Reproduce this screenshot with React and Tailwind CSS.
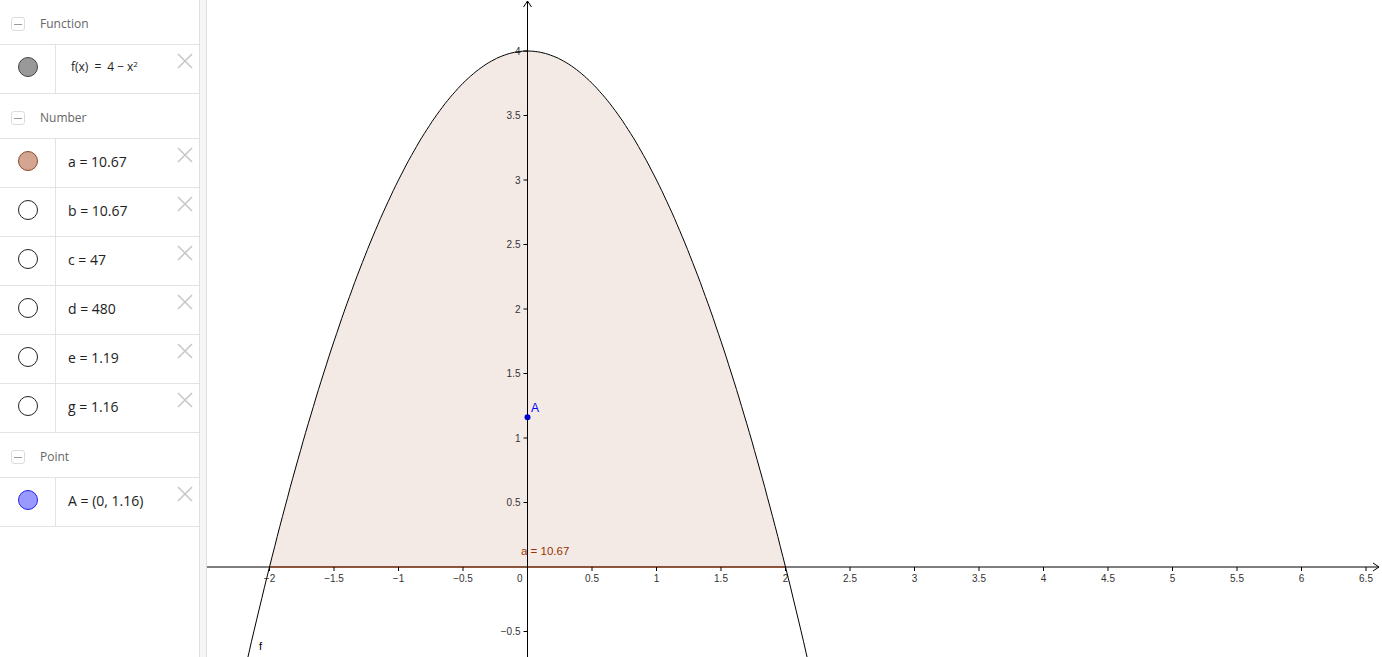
import React from 'react';

const ox = 320.5;
const oy = 567;
const s = 129;

const px = (x) => ox + x * s;
const py = (y) => oy - y * s;
const fmt = (v) => (v < 0 ? '\u2212' + String(Math.abs(v)) : String(v));

function curvePath(a, b) {
  let d = '';
  for (let x = a; x <= b + 1e-9; x += 0.02) {
    d += (d ? ' L' : 'M') + px(x).toFixed(1) + ' ' + py(4 - x * x).toFixed(1);
  }
  return d;
}

function HeaderRow({ label }) {
  return (
    <div className="flex h-[45px] items-center border-b border-[#e3e3e3] pl-[11px] pt-[4px]">
      <div className="flex h-[14px] w-[14px] items-center justify-center rounded-[3px] border border-[#dcdcdc]">
        <div className="h-px w-[8px] bg-[#9a9a9a]" />
      </div>
      <span className="ml-[15px] text-[12px] text-[#666]">{label}</span>
    </div>
  );
}

function ItemRow({ dot, children }) {
  return (
    <div className="relative flex h-[49px] border-b border-[#e3e3e3]">
      <div className="flex w-[56px] items-center justify-center border-r border-[#e3e3e3] pb-[4px]">
        <div className={'h-[20px] w-[20px] rounded-full border ' + dot} />
      </div>
      <div className="flex items-center pb-[4px] pl-[12px] text-[14px] text-[#222]">{children}</div>
      <svg className="absolute right-[6px] top-[8px]" width="16" height="16" viewBox="0 0 16 16">
        <path d="M1 1 L15 15 M15 1 L1 15" stroke="#c8c8c8" strokeWidth="1.6" />
      </svg>
    </div>
  );
}

export default function App() {
  const xTicks = [];
  for (let i = -4; i <= 13; i++) xTicks.push(i / 2);
  const yTicks = [-0.5, 0.5, 1, 1.5, 2, 2.5, 3, 3.5, 4];

  const fillPath = curvePath(-2, 2) + ` L${px(2)} ${oy} L${px(-2)} ${oy} Z`;

  return (
    <div className="flex h-[657px] w-[1382px] overflow-hidden bg-white" style={{ fontFamily: '"Open Sans", "Liberation Sans", sans-serif' }}>
      <div className="w-[200px] shrink-0 border-r border-[#e0e0e0]">
        <HeaderRow label="Function" />
        <ItemRow dot="bg-[#999999] border-[#444]">
          <span className="ml-[3px] flex items-baseline text-[12px]">
            f(x)<span className="mx-[6px]">=</span>4<span className="mx-[3px]">−</span>x<sup className="text-[8px]">2</sup>
          </span>
        </ItemRow>
        <HeaderRow label="Number" />
        <ItemRow dot="bg-[#d4a590] border-[#8a4a2a]">a = 10.67</ItemRow>
        <ItemRow dot="bg-white border-[#222]">b = 10.67</ItemRow>
        <ItemRow dot="bg-white border-[#222]">c = 47</ItemRow>
        <ItemRow dot="bg-white border-[#222]">d = 480</ItemRow>
        <ItemRow dot="bg-white border-[#222]">e = 1.19</ItemRow>
        <ItemRow dot="bg-white border-[#222]">g = 1.16</ItemRow>
        <HeaderRow label="Point" />
        <ItemRow dot="bg-[#9999ff] border-[#2222ee]">A = (0, 1.16)</ItemRow>
      </div>
      <div className="w-[7px] shrink-0 border-r border-[#e0e0e0] bg-[#f6f6f6]" />
      <svg width="1174" height="657" viewBox="0 0 1174 657" className="shrink-0" style={{ fontFamily: '"Liberation Sans", Arial, sans-serif' }}>
        <path d={fillPath} fill="#f3eae6" />
        <line x1="0" y1={oy} x2="1172" y2={oy} stroke="#000" strokeWidth="1" />
        <line x1={px(-2)} y1={oy} x2={px(2)} y2={oy} stroke="#993300" strokeWidth="1.2" />
        <path d={`M1166 ${oy - 4} L1172 ${oy} L1166 ${oy + 4}`} fill="none" stroke="#000" strokeWidth="1" />
        <line x1={ox} y1="657" x2={ox} y2="1" stroke="#000" strokeWidth="1" />
        <path d={`M${ox - 4} 7 L${ox} 1 L${ox + 4} 7`} fill="none" stroke="#000" strokeWidth="1" />
        {xTicks.map((t) =>
          t === 0 ? null : (
            <g key={'x' + t}>
              <line x1={px(t)} y1={oy} x2={px(t)} y2={oy + 4} stroke="#000" />
              <text x={px(t)} y={oy + 15} fontSize="10" fill="#333" textAnchor="middle">{fmt(t)}</text>
            </g>
          )
        )}
        <text x={ox - 5} y={oy + 15} fontSize="10" fill="#333" textAnchor="end">0</text>
        {yTicks.map((t) => (
          <g key={'y' + t}>
            <line x1={ox - 4} y1={py(t)} x2={ox} y2={py(t)} stroke="#000" />
            <text x={ox - 7} y={py(t) + 3.5} fontSize="10" fill="#333" textAnchor="end">{fmt(t)}</text>
          </g>
        ))}
        <path d={curvePath(-2.2, 2.2)} fill="none" stroke="#000" strokeWidth="1" />
        <text x="314" y="555" fontSize="11.5" fill="#993300">a = 10.67</text>
        <circle cx={ox} cy={py(1.16)} r="3" fill="#0000cc" />
        <text x="324" y="412" fontSize="12" fill="#0000ff">A</text>
        <text x="52" y="650" fontSize="11" fill="#000">f</text>
      </svg>
    </div>
  );
}
